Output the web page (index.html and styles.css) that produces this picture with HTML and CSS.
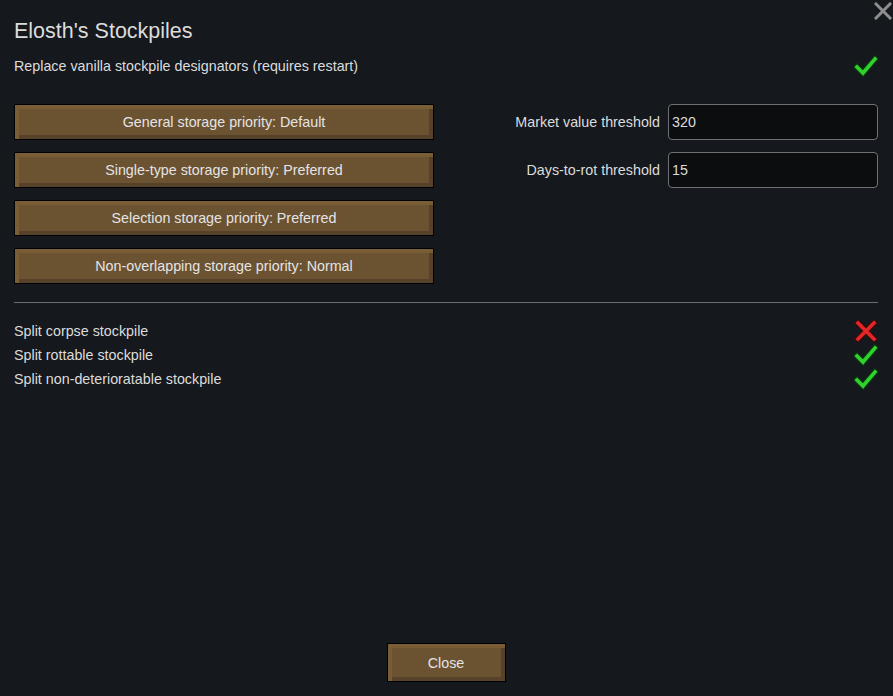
FILE: index.html
```html
<!DOCTYPE html>
<html lang="en">
<head>
    <meta charset="UTF-8">
    <meta name="viewport" content="width=device-width, initial-scale=1.0">
    <title>Elosth's Stockpiles</title>
    <link rel="stylesheet" href="styles.css">
</head>
<body>
    <div class="window">
        <!-- Window close -->
        <div class="close-x">
            <svg viewBox="0 0 18 18" width="18" height="18">
                <path d="M2 2 L16 16 M16 2 L2 16" stroke="#8e8e8e" stroke-width="3" stroke-linecap="square"/>
            </svg>
        </div>

        <div class="title">Elosth's Stockpiles</div>

        <div class="option-row top-option">
            <span>Replace vanilla stockpile designators (requires restart)</span>
            <svg class="check" viewBox="0 0 24 24" width="24" height="24">
                <path d="M3 13 L9 19 L21 5" fill="none" stroke="#0c3a0c" stroke-width="6" stroke-linecap="square"/>
                <path d="M3 13 L9 19 L21 5" fill="none" stroke="#2fd22f" stroke-width="3.6" stroke-linecap="square"/>
            </svg>
        </div>

        <div class="settings">
            <div class="buttons">
                <div class="btn wide">General storage priority: Default</div>
                <div class="btn wide">Single-type storage priority: Preferred</div>
                <div class="btn wide">Selection storage priority: Preferred</div>
                <div class="btn wide">Non-overlapping storage priority: Normal</div>
            </div>
            <div class="fields">
                <div class="field">
                    <label>Market value threshold</label>
                    <div class="input">320</div>
                </div>
                <div class="field">
                    <label>Days-to-rot threshold</label>
                    <div class="input">15</div>
                </div>
            </div>
        </div>

        <div class="separator"></div>

        <div class="toggles">
            <div class="option-row">
                <span>Split corpse stockpile</span>
                <svg class="cross" viewBox="0 0 24 24" width="24" height="24">
                    <path d="M4 4 L20 20 M20 4 L4 20" stroke="#3a0c0c" stroke-width="6" stroke-linecap="square"/>
                    <path d="M4 4 L20 20 M20 4 L4 20" stroke="#e52626" stroke-width="3.6" stroke-linecap="square"/>
                </svg>
            </div>
            <div class="option-row">
                <span>Split rottable stockpile</span>
                <svg class="check" viewBox="0 0 24 24" width="24" height="24">
                    <path d="M3 13 L9 19 L21 5" fill="none" stroke="#0c3a0c" stroke-width="6" stroke-linecap="square"/>
                    <path d="M3 13 L9 19 L21 5" fill="none" stroke="#2fd22f" stroke-width="3.6" stroke-linecap="square"/>
                </svg>
            </div>
            <div class="option-row">
                <span>Split non-deterioratable stockpile</span>
                <svg class="check" viewBox="0 0 24 24" width="24" height="24">
                    <path d="M3 13 L9 19 L21 5" fill="none" stroke="#0c3a0c" stroke-width="6" stroke-linecap="square"/>
                    <path d="M3 13 L9 19 L21 5" fill="none" stroke="#2fd22f" stroke-width="3.6" stroke-linecap="square"/>
                </svg>
            </div>
        </div>

        <div class="footer">
            <div class="btn close-btn">Close</div>
        </div>
    </div>
</body>
</html>
```

FILE: styles.css
```css
* {
    margin: 0;
    padding: 0;
    box-sizing: border-box;
}

body {
    font-family: "Liberation Sans", Arial, sans-serif;
    background-color: #15181d;
    color: #dcdcdc;
    height: 100vh;
    overflow: hidden;
}

.window {
    position: relative;
    height: 100vh;
    padding: 18px 15px 14px 14px;
    display: flex;
    flex-direction: column;
}

.close-x {
    position: absolute;
    top: 2px;
    right: 1px;
    width: 18px;
    height: 18px;
}

.close-x svg {
    display: block;
}

.title {
    font-size: 21.5px;
    line-height: 26px;
    margin-bottom: 10px;
}

.option-row {
    display: flex;
    justify-content: space-between;
    align-items: center;
    font-size: 14.3px;
    height: 24px;
}

.option-row svg {
    display: block;
}

.top-option {
    margin-bottom: 26px;
}

.settings {
    display: flex;
    justify-content: space-between;
}

.buttons {
    display: flex;
    flex-direction: column;
    gap: 12px;
}

.btn {
    background: #6b5231;
    border: 1px solid #000;
    box-shadow:
        inset 4px 4px 0 #785d35,
        inset -4px -4px 0 #56422a;
    color: #e4e4e4;
    font-size: 14.3px;
    display: flex;
    align-items: center;
    justify-content: center;
}

.wide {
    width: 420px;
    height: 36px;
}

.fields {
    display: flex;
    flex-direction: column;
    gap: 12px;
}

.field {
    display: flex;
    align-items: center;
    justify-content: flex-end;
    gap: 8px;
    font-size: 14.3px;
}

.input {
    width: 210px;
    height: 36px;
    background: #0c0d0f;
    border: 1px solid #6e7074;
    border-radius: 4px;
    padding: 0 3px;
    display: flex;
    align-items: center;
    color: #dcdcdc;
}

.separator {
    height: 1px;
    background: #6c6d70;
    margin: 18px 0 16px;
}

.footer {
    margin-top: auto;
    display: flex;
    justify-content: center;
}

.close-btn {
    width: 119px;
    height: 39px;
}
```
